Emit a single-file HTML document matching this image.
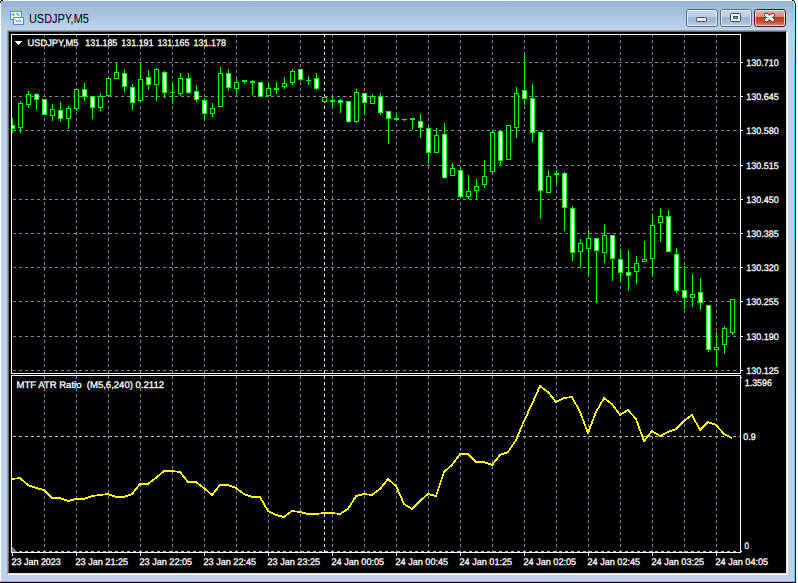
<!DOCTYPE html>
<html><head><meta charset="utf-8"><title>USDJPY,M5</title>
<style>
html,body{margin:0;padding:0;background:#fff;}
body{width:798px;height:583px;position:relative;overflow:hidden;font-family:"Liberation Sans",sans-serif;}
#win{position:absolute;left:0;top:0;width:796px;height:583px;background:#bcd2ea;overflow:hidden;}
#tb{position:absolute;left:0;top:1px;width:795px;height:29px;background:linear-gradient(#98b4d2,#bdd4ed);}
#hl{position:absolute;left:0;top:0;width:795px;height:1px;background:#fbfdff;}
#hlL{position:absolute;left:0;top:0;width:1px;height:581px;background:#fbfdff;}
#cy{position:absolute;left:794px;top:2px;width:1px;height:580px;background:linear-gradient(#aee6f8 0,#5ad6fb 60px,#56d6ff);}
#dk{position:absolute;left:795px;top:3px;width:1px;height:580px;background:#1c1616;}
#cyb{position:absolute;left:0;top:581px;width:795px;height:1px;background:#36d3ec;}
#dkb{position:absolute;left:0;top:582px;width:796px;height:1px;background:#0a0a0a;}
#edge{position:absolute;left:7px;top:30px;width:781px;height:545px;box-sizing:border-box;border:1px solid;border-color:#a0a0a0 #fff #fff #a0a0a0;}
#edge2{position:absolute;left:8px;top:31px;width:779px;height:543px;box-sizing:border-box;border:1px solid;border-color:#696969 #e3e3e3 #e3e3e3 #696969;background:#000;}
#title{position:absolute;left:29.3px;top:10px;transform:scaleX(0.872);font-size:12.5px;line-height:18px;color:#000;white-space:pre;transform-origin:0 0;}
.btn{position:absolute;top:9px;height:18px;box-sizing:border-box;border:1px solid #566a88;border-radius:3px;}
.btn i{position:absolute;left:0;top:0;right:0;bottom:0;border:1px solid rgba(255,255,255,.65);border-radius:2px;}
.g{background:linear-gradient(#c3d5ea 0,#bccfe6 43%,#9ab4d2 44%,#a2bcd9 70%,#b7cfea 100%);}
.r{background:linear-gradient(#e9ada0 0,#dc8a7a 43%,#b9391c 44%,#c24b2e 70%,#d98468 100%);border-color:#481222;}
</style></head><body>
<div id="win">
<div id="tb"></div><div id="hl"></div><div id="hlL"></div>
<div id="cy"></div><div id="dk"></div><div id="cyb"></div><div id="dkb"></div>
<svg width="796" height="4" style="position:absolute;left:0;top:0" shape-rendering="crispEdges">
<rect x="1" y="0" width="2" height="1" fill="#0c0c0c"/><rect x="0" y="1" width="1" height="2" fill="#0c0c0c"/><rect x="1" y="1" width="1" height="1" fill="#e8eef5"/>
<rect x="792" y="0" width="2" height="1" fill="#0a1c22"/><rect x="794" y="0" width="2" height="1" fill="#fff"/><rect x="793" y="1" width="1" height="2" fill="#c8eefa"/><rect x="794" y="1" width="1" height="2" fill="#0c3a44"/><rect x="795" y="1" width="1" height="2" fill="#fff"/>
</svg>
<div id="edge"></div><div id="edge2"></div>
<svg width="16" height="16" viewBox="0 0 16 16" style="position:absolute;left:9px;top:10px" shape-rendering="crispEdges">
<rect x="1.5" y="1.5" width="11" height="8" fill="#fff" stroke="#4a86f8"/><rect x="1.5" y="1.5" width="11" height="8" fill="none" stroke="#3f9a96" stroke-dasharray="1 2"/>
<path d="M5.5 3.5 L3.5 4.5 L5.5 5.5 M7.5 3 L9.5 5 L10.5 5.5" fill="none" stroke="#4a86f0" stroke-width="1.2" shape-rendering="auto"/>
<rect x="4.5" y="7.5" width="10" height="7" fill="#fff" stroke="#4a86f8"/><rect x="4.5" y="7.5" width="10" height="7" fill="none" stroke="#3f9a96" stroke-dasharray="1 2"/>
<polyline points="6.5,9.5 8.5,12.5 10.5,9.5 12.5,12.5" fill="none" stroke="#4a86f0" shape-rendering="auto"/>
</svg>
<div id="title">USDJPY,M5</div>
<div class="btn g" style="left:686px;width:32px"><i></i><svg width="30" height="16" style="position:absolute;left:0;top:0"><rect x="9.5" y="7.5" width="10" height="4" fill="#f4f4f4" stroke="#3f4457" rx="1.2"/></svg></div>
<div class="btn g" style="left:720px;width:32px"><i></i><svg width="30" height="16" style="position:absolute;left:0;top:0"><rect x="9.5" y="3.5" width="10" height="8" fill="#f8f8f8" stroke="#3f4457" rx="1.2"/><rect x="12.5" y="6.5" width="4" height="2" fill="#8fb0d8" stroke="#3f4457"/></svg></div>
<div class="btn r" style="left:754px;width:32px"><i></i><svg width="30" height="16" style="position:absolute;left:0;top:0"><g stroke-linecap="round" fill="none"><path d="M11.3 5.1 L17.7 9.9 M17.7 5.1 L11.3 9.9" stroke="#454250" stroke-width="4.4"/><path d="M11.3 5.1 L17.7 9.9 M17.7 5.1 L11.3 9.9" stroke="#fafafa" stroke-width="2.6"/></g></svg></div>
</div>
<svg width="798" height="583" viewBox="0 0 798 583" style="position:absolute;left:0;top:0" shape-rendering="crispEdges">
<defs><clipPath id="cm"><rect x="12" y="35" width="728" height="338"/></clipPath><clipPath id="cs"><rect x="12" y="376" width="728" height="176"/></clipPath></defs>
<rect x="9" y="32" width="777" height="541" fill="#000"/>
<line x1="44.5" y1="34" x2="44.5" y2="373" stroke="#778899" stroke-dasharray="3 3"/>
<line x1="44.5" y1="376" x2="44.5" y2="552" stroke="#778899" stroke-dasharray="3 3" stroke-dashoffset="0"/>
<line x1="76.5" y1="34" x2="76.5" y2="373" stroke="#778899" stroke-dasharray="3 3"/>
<line x1="76.5" y1="376" x2="76.5" y2="552" stroke="#778899" stroke-dasharray="3 3" stroke-dashoffset="0"/>
<line x1="108.5" y1="34" x2="108.5" y2="373" stroke="#778899" stroke-dasharray="3 3"/>
<line x1="108.5" y1="376" x2="108.5" y2="552" stroke="#778899" stroke-dasharray="3 3" stroke-dashoffset="0"/>
<line x1="140.5" y1="34" x2="140.5" y2="373" stroke="#778899" stroke-dasharray="3 3"/>
<line x1="140.5" y1="376" x2="140.5" y2="552" stroke="#778899" stroke-dasharray="3 3" stroke-dashoffset="0"/>
<line x1="172.5" y1="34" x2="172.5" y2="373" stroke="#778899" stroke-dasharray="3 3"/>
<line x1="172.5" y1="376" x2="172.5" y2="552" stroke="#778899" stroke-dasharray="3 3" stroke-dashoffset="0"/>
<line x1="204.5" y1="34" x2="204.5" y2="373" stroke="#778899" stroke-dasharray="3 3"/>
<line x1="204.5" y1="376" x2="204.5" y2="552" stroke="#778899" stroke-dasharray="3 3" stroke-dashoffset="0"/>
<line x1="236.5" y1="34" x2="236.5" y2="373" stroke="#778899" stroke-dasharray="3 3"/>
<line x1="236.5" y1="376" x2="236.5" y2="552" stroke="#778899" stroke-dasharray="3 3" stroke-dashoffset="0"/>
<line x1="268.5" y1="34" x2="268.5" y2="373" stroke="#778899" stroke-dasharray="3 3"/>
<line x1="268.5" y1="376" x2="268.5" y2="552" stroke="#778899" stroke-dasharray="3 3" stroke-dashoffset="0"/>
<line x1="300.5" y1="34" x2="300.5" y2="373" stroke="#778899" stroke-dasharray="3 3"/>
<line x1="300.5" y1="376" x2="300.5" y2="552" stroke="#778899" stroke-dasharray="3 3" stroke-dashoffset="0"/>
<line x1="332.5" y1="34" x2="332.5" y2="373" stroke="#778899" stroke-dasharray="3 3"/>
<line x1="332.5" y1="376" x2="332.5" y2="552" stroke="#778899" stroke-dasharray="3 3" stroke-dashoffset="0"/>
<line x1="364.5" y1="34" x2="364.5" y2="373" stroke="#778899" stroke-dasharray="3 3"/>
<line x1="364.5" y1="376" x2="364.5" y2="552" stroke="#778899" stroke-dasharray="3 3" stroke-dashoffset="0"/>
<line x1="396.5" y1="34" x2="396.5" y2="373" stroke="#778899" stroke-dasharray="3 3"/>
<line x1="396.5" y1="376" x2="396.5" y2="552" stroke="#778899" stroke-dasharray="3 3" stroke-dashoffset="0"/>
<line x1="428.5" y1="34" x2="428.5" y2="373" stroke="#778899" stroke-dasharray="3 3"/>
<line x1="428.5" y1="376" x2="428.5" y2="552" stroke="#778899" stroke-dasharray="3 3" stroke-dashoffset="0"/>
<line x1="460.5" y1="34" x2="460.5" y2="373" stroke="#778899" stroke-dasharray="3 3"/>
<line x1="460.5" y1="376" x2="460.5" y2="552" stroke="#778899" stroke-dasharray="3 3" stroke-dashoffset="0"/>
<line x1="492.5" y1="34" x2="492.5" y2="373" stroke="#778899" stroke-dasharray="3 3"/>
<line x1="492.5" y1="376" x2="492.5" y2="552" stroke="#778899" stroke-dasharray="3 3" stroke-dashoffset="0"/>
<line x1="524.5" y1="34" x2="524.5" y2="373" stroke="#778899" stroke-dasharray="3 3"/>
<line x1="524.5" y1="376" x2="524.5" y2="552" stroke="#778899" stroke-dasharray="3 3" stroke-dashoffset="0"/>
<line x1="556.5" y1="34" x2="556.5" y2="373" stroke="#778899" stroke-dasharray="3 3"/>
<line x1="556.5" y1="376" x2="556.5" y2="552" stroke="#778899" stroke-dasharray="3 3" stroke-dashoffset="0"/>
<line x1="588.5" y1="34" x2="588.5" y2="373" stroke="#778899" stroke-dasharray="3 3"/>
<line x1="588.5" y1="376" x2="588.5" y2="552" stroke="#778899" stroke-dasharray="3 3" stroke-dashoffset="0"/>
<line x1="620.5" y1="34" x2="620.5" y2="373" stroke="#778899" stroke-dasharray="3 3"/>
<line x1="620.5" y1="376" x2="620.5" y2="552" stroke="#778899" stroke-dasharray="3 3" stroke-dashoffset="0"/>
<line x1="652.5" y1="34" x2="652.5" y2="373" stroke="#778899" stroke-dasharray="3 3"/>
<line x1="652.5" y1="376" x2="652.5" y2="552" stroke="#778899" stroke-dasharray="3 3" stroke-dashoffset="0"/>
<line x1="684.5" y1="34" x2="684.5" y2="373" stroke="#778899" stroke-dasharray="3 3"/>
<line x1="684.5" y1="376" x2="684.5" y2="552" stroke="#778899" stroke-dasharray="3 3" stroke-dashoffset="0"/>
<line x1="716.5" y1="34" x2="716.5" y2="373" stroke="#778899" stroke-dasharray="3 3"/>
<line x1="716.5" y1="376" x2="716.5" y2="552" stroke="#778899" stroke-dasharray="3 3" stroke-dashoffset="0"/>
<line x1="324.5" y1="34" x2="324.5" y2="373" stroke="#fff" stroke-dasharray="3 3"/>
<line x1="324.5" y1="376" x2="324.5" y2="552" stroke="#fff" stroke-dasharray="3 3"/>
<line x1="13" y1="62.5" x2="738" y2="62.5" stroke="#778899" stroke-dasharray="3 3"/>
<rect x="741" y="62" width="2" height="1" fill="#fff"/>
<line x1="13" y1="96.5" x2="738" y2="96.5" stroke="#778899" stroke-dasharray="3 3"/>
<rect x="741" y="96" width="2" height="1" fill="#fff"/>
<line x1="13" y1="130.5" x2="738" y2="130.5" stroke="#778899" stroke-dasharray="3 3"/>
<rect x="741" y="130" width="2" height="1" fill="#fff"/>
<line x1="13" y1="165.5" x2="738" y2="165.5" stroke="#778899" stroke-dasharray="3 3"/>
<rect x="741" y="165" width="2" height="1" fill="#fff"/>
<line x1="13" y1="199.5" x2="738" y2="199.5" stroke="#778899" stroke-dasharray="3 3"/>
<rect x="741" y="199" width="2" height="1" fill="#fff"/>
<line x1="13" y1="233.5" x2="738" y2="233.5" stroke="#778899" stroke-dasharray="3 3"/>
<rect x="741" y="233" width="2" height="1" fill="#fff"/>
<line x1="13" y1="267.5" x2="738" y2="267.5" stroke="#778899" stroke-dasharray="3 3"/>
<rect x="741" y="267" width="2" height="1" fill="#fff"/>
<line x1="13" y1="301.5" x2="738" y2="301.5" stroke="#778899" stroke-dasharray="3 3"/>
<rect x="741" y="301" width="2" height="1" fill="#fff"/>
<line x1="13" y1="336.5" x2="738" y2="336.5" stroke="#778899" stroke-dasharray="3 3"/>
<rect x="741" y="336" width="2" height="1" fill="#fff"/>
<line x1="13" y1="370.5" x2="738" y2="370.5" stroke="#778899" stroke-dasharray="3 3"/>
<rect x="741" y="370" width="2" height="1" fill="#fff"/>
<line x1="13" y1="436.5" x2="738" y2="436.5" stroke="#c0c0c0" stroke-dasharray="3 3"/>
<line x1="13" y1="551.5" x2="738" y2="551.5" stroke="#c0c0c0" stroke-dasharray="3 3"/>
<rect x="739" y="436" width="1" height="1" fill="#c0c0c0"/><rect x="741" y="551" width="1" height="1" fill="#fff"/>
<g clip-path="url(#cm)">
<rect x="12" y="118" width="1" height="15" fill="#00ff00"/>
<rect x="10" y="125" width="5" height="4" fill="#00ff00"/>
<rect x="11" y="126" width="3" height="2" fill="#fff"/>
<rect x="20" y="101" width="1" height="32" fill="#00ff00"/>
<rect x="18" y="103" width="5" height="25" fill="#00ff00"/>
<rect x="19" y="104" width="3" height="23" fill="#000"/>
<rect x="28" y="91" width="1" height="17" fill="#00ff00"/>
<rect x="26" y="94" width="5" height="11" fill="#00ff00"/>
<rect x="27" y="95" width="3" height="9" fill="#000"/>
<rect x="36" y="93" width="1" height="17" fill="#00ff00"/>
<rect x="34" y="94" width="5" height="6" fill="#00ff00"/>
<rect x="35" y="95" width="3" height="4" fill="#fff"/>
<rect x="44" y="99" width="1" height="16" fill="#00ff00"/>
<rect x="42" y="99" width="5" height="16" fill="#00ff00"/>
<rect x="43" y="100" width="3" height="14" fill="#fff"/>
<rect x="52" y="104" width="1" height="17" fill="#00ff00"/>
<rect x="50" y="109" width="5" height="7" fill="#00ff00"/>
<rect x="51" y="110" width="3" height="5" fill="#000"/>
<rect x="60" y="102" width="1" height="20" fill="#00ff00"/>
<rect x="58" y="110" width="5" height="9" fill="#00ff00"/>
<rect x="59" y="111" width="3" height="7" fill="#fff"/>
<rect x="68" y="106" width="1" height="23" fill="#00ff00"/>
<rect x="66" y="108" width="5" height="11" fill="#00ff00"/>
<rect x="67" y="109" width="3" height="9" fill="#000"/>
<rect x="76" y="89" width="1" height="22" fill="#00ff00"/>
<rect x="74" y="89" width="5" height="20" fill="#00ff00"/>
<rect x="75" y="90" width="3" height="18" fill="#000"/>
<rect x="84" y="83" width="1" height="18" fill="#00ff00"/>
<rect x="82" y="89" width="5" height="8" fill="#00ff00"/>
<rect x="83" y="90" width="3" height="6" fill="#fff"/>
<rect x="92" y="96" width="1" height="23" fill="#00ff00"/>
<rect x="90" y="96" width="5" height="12" fill="#00ff00"/>
<rect x="91" y="97" width="3" height="10" fill="#fff"/>
<rect x="100" y="93" width="1" height="18" fill="#00ff00"/>
<rect x="98" y="96" width="5" height="12" fill="#00ff00"/>
<rect x="99" y="97" width="3" height="10" fill="#000"/>
<rect x="108" y="78" width="1" height="18" fill="#00ff00"/>
<rect x="106" y="78" width="5" height="18" fill="#00ff00"/>
<rect x="107" y="79" width="3" height="16" fill="#000"/>
<rect x="116" y="63" width="1" height="16" fill="#00ff00"/>
<rect x="114" y="72" width="5" height="7" fill="#00ff00"/>
<rect x="115" y="73" width="3" height="5" fill="#000"/>
<rect x="124" y="69" width="1" height="23" fill="#00ff00"/>
<rect x="122" y="73" width="5" height="14" fill="#00ff00"/>
<rect x="123" y="74" width="3" height="12" fill="#fff"/>
<rect x="132" y="84" width="1" height="26" fill="#00ff00"/>
<rect x="130" y="87" width="5" height="16" fill="#00ff00"/>
<rect x="131" y="88" width="3" height="14" fill="#fff"/>
<rect x="140" y="63" width="1" height="38" fill="#00ff00"/>
<rect x="138" y="79" width="5" height="22" fill="#00ff00"/>
<rect x="139" y="80" width="3" height="20" fill="#000"/>
<rect x="148" y="70" width="1" height="20" fill="#00ff00"/>
<rect x="146" y="77" width="5" height="8" fill="#00ff00"/>
<rect x="147" y="78" width="3" height="6" fill="#fff"/>
<rect x="156" y="68" width="1" height="33" fill="#00ff00"/>
<rect x="154" y="69" width="5" height="16" fill="#00ff00"/>
<rect x="155" y="70" width="3" height="14" fill="#000"/>
<rect x="164" y="71" width="1" height="27" fill="#00ff00"/>
<rect x="162" y="72" width="5" height="21" fill="#00ff00"/>
<rect x="163" y="73" width="3" height="19" fill="#fff"/>
<rect x="172" y="82" width="1" height="22" fill="#00ff00"/>
<rect x="170" y="92" width="5" height="1" fill="#00ff00"/>
<rect x="180" y="73" width="1" height="23" fill="#00ff00"/>
<rect x="178" y="78" width="5" height="16" fill="#00ff00"/>
<rect x="179" y="79" width="3" height="14" fill="#000"/>
<rect x="188" y="73" width="1" height="21" fill="#00ff00"/>
<rect x="186" y="78" width="5" height="15" fill="#00ff00"/>
<rect x="187" y="79" width="3" height="13" fill="#fff"/>
<rect x="196" y="85" width="1" height="17" fill="#00ff00"/>
<rect x="194" y="91" width="5" height="9" fill="#00ff00"/>
<rect x="195" y="92" width="3" height="7" fill="#fff"/>
<rect x="204" y="98" width="1" height="21" fill="#00ff00"/>
<rect x="202" y="100" width="5" height="14" fill="#00ff00"/>
<rect x="203" y="101" width="3" height="12" fill="#fff"/>
<rect x="212" y="103" width="1" height="14" fill="#00ff00"/>
<rect x="210" y="108" width="5" height="6" fill="#00ff00"/>
<rect x="211" y="109" width="3" height="4" fill="#000"/>
<rect x="220" y="67" width="1" height="40" fill="#00ff00"/>
<rect x="218" y="73" width="5" height="34" fill="#00ff00"/>
<rect x="219" y="74" width="3" height="32" fill="#000"/>
<rect x="228" y="69" width="1" height="22" fill="#00ff00"/>
<rect x="226" y="73" width="5" height="15" fill="#00ff00"/>
<rect x="227" y="74" width="3" height="13" fill="#fff"/>
<rect x="236" y="79" width="1" height="15" fill="#00ff00"/>
<rect x="234" y="82" width="5" height="7" fill="#00ff00"/>
<rect x="235" y="83" width="3" height="5" fill="#000"/>
<rect x="244" y="80" width="1" height="4" fill="#00ff00"/>
<rect x="242" y="80" width="5" height="2" fill="#00ff00"/>
<rect x="252" y="80" width="1" height="15" fill="#00ff00"/>
<rect x="250" y="81" width="5" height="2" fill="#00ff00"/>
<rect x="260" y="82" width="1" height="15" fill="#00ff00"/>
<rect x="258" y="82" width="5" height="15" fill="#00ff00"/>
<rect x="259" y="83" width="3" height="13" fill="#fff"/>
<rect x="268" y="83" width="1" height="14" fill="#00ff00"/>
<rect x="266" y="88" width="5" height="8" fill="#00ff00"/>
<rect x="267" y="89" width="3" height="6" fill="#000"/>
<rect x="276" y="82" width="1" height="12" fill="#00ff00"/>
<rect x="274" y="88" width="5" height="2" fill="#00ff00"/>
<rect x="284" y="77" width="1" height="12" fill="#00ff00"/>
<rect x="282" y="83" width="5" height="4" fill="#00ff00"/>
<rect x="283" y="84" width="3" height="2" fill="#000"/>
<rect x="292" y="69" width="1" height="16" fill="#00ff00"/>
<rect x="290" y="71" width="5" height="12" fill="#00ff00"/>
<rect x="291" y="72" width="3" height="10" fill="#000"/>
<rect x="300" y="69" width="1" height="12" fill="#00ff00"/>
<rect x="298" y="69" width="5" height="11" fill="#00ff00"/>
<rect x="299" y="70" width="3" height="9" fill="#fff"/>
<rect x="308" y="76" width="1" height="9" fill="#00ff00"/>
<rect x="306" y="80" width="5" height="1" fill="#00ff00"/>
<rect x="316" y="73" width="1" height="17" fill="#00ff00"/>
<rect x="314" y="78" width="5" height="11" fill="#00ff00"/>
<rect x="315" y="79" width="3" height="9" fill="#fff"/>
<rect x="324" y="96" width="1" height="6" fill="#00ff00"/>
<rect x="322" y="97" width="5" height="5" fill="#00ff00"/>
<rect x="323" y="98" width="3" height="3" fill="#000"/>
<rect x="332" y="96" width="1" height="11" fill="#00ff00"/>
<rect x="330" y="100" width="5" height="2" fill="#00ff00"/>
<rect x="340" y="99" width="1" height="14" fill="#00ff00"/>
<rect x="338" y="100" width="5" height="3" fill="#00ff00"/>
<rect x="339" y="101" width="3" height="1" fill="#fff"/>
<rect x="348" y="101" width="1" height="22" fill="#00ff00"/>
<rect x="346" y="101" width="5" height="21" fill="#00ff00"/>
<rect x="347" y="102" width="3" height="19" fill="#fff"/>
<rect x="356" y="89" width="1" height="34" fill="#00ff00"/>
<rect x="354" y="92" width="5" height="30" fill="#00ff00"/>
<rect x="355" y="93" width="3" height="28" fill="#000"/>
<rect x="364" y="93" width="1" height="22" fill="#00ff00"/>
<rect x="362" y="93" width="5" height="10" fill="#00ff00"/>
<rect x="363" y="94" width="3" height="8" fill="#fff"/>
<rect x="372" y="94" width="1" height="10" fill="#00ff00"/>
<rect x="370" y="96" width="5" height="8" fill="#00ff00"/>
<rect x="371" y="97" width="3" height="6" fill="#000"/>
<rect x="380" y="93" width="1" height="22" fill="#00ff00"/>
<rect x="378" y="96" width="5" height="17" fill="#00ff00"/>
<rect x="379" y="97" width="3" height="15" fill="#fff"/>
<rect x="388" y="111" width="1" height="33" fill="#00ff00"/>
<rect x="386" y="111" width="5" height="8" fill="#00ff00"/>
<rect x="387" y="112" width="3" height="6" fill="#fff"/>
<rect x="396" y="114" width="1" height="7" fill="#00ff00"/>
<rect x="394" y="118" width="5" height="2" fill="#00ff00"/>
<rect x="404" y="119" width="1" height="2" fill="#00ff00"/>
<rect x="402" y="119" width="5" height="1" fill="#00ff00"/>
<rect x="412" y="118" width="1" height="12" fill="#00ff00"/>
<rect x="410" y="118" width="5" height="2" fill="#00ff00"/>
<rect x="420" y="114" width="1" height="24" fill="#00ff00"/>
<rect x="418" y="121" width="5" height="7" fill="#00ff00"/>
<rect x="419" y="122" width="3" height="5" fill="#fff"/>
<rect x="428" y="126" width="1" height="38" fill="#00ff00"/>
<rect x="426" y="128" width="5" height="25" fill="#00ff00"/>
<rect x="427" y="129" width="3" height="23" fill="#fff"/>
<rect x="436" y="128" width="1" height="25" fill="#00ff00"/>
<rect x="434" y="135" width="5" height="18" fill="#00ff00"/>
<rect x="435" y="136" width="3" height="16" fill="#000"/>
<rect x="444" y="123" width="1" height="56" fill="#00ff00"/>
<rect x="442" y="134" width="5" height="44" fill="#00ff00"/>
<rect x="443" y="135" width="3" height="42" fill="#fff"/>
<rect x="452" y="163" width="1" height="13" fill="#00ff00"/>
<rect x="450" y="168" width="5" height="8" fill="#00ff00"/>
<rect x="451" y="169" width="3" height="6" fill="#000"/>
<rect x="460" y="167" width="1" height="30" fill="#00ff00"/>
<rect x="458" y="170" width="5" height="27" fill="#00ff00"/>
<rect x="459" y="171" width="3" height="25" fill="#fff"/>
<rect x="468" y="175" width="1" height="24" fill="#00ff00"/>
<rect x="466" y="191" width="5" height="6" fill="#00ff00"/>
<rect x="467" y="192" width="3" height="4" fill="#000"/>
<rect x="476" y="179" width="1" height="20" fill="#00ff00"/>
<rect x="474" y="186" width="5" height="5" fill="#00ff00"/>
<rect x="475" y="187" width="3" height="3" fill="#000"/>
<rect x="484" y="160" width="1" height="28" fill="#00ff00"/>
<rect x="482" y="176" width="5" height="9" fill="#00ff00"/>
<rect x="483" y="177" width="3" height="7" fill="#000"/>
<rect x="492" y="130" width="1" height="42" fill="#00ff00"/>
<rect x="490" y="132" width="5" height="40" fill="#00ff00"/>
<rect x="491" y="133" width="3" height="38" fill="#000"/>
<rect x="500" y="130" width="1" height="35" fill="#00ff00"/>
<rect x="498" y="131" width="5" height="30" fill="#00ff00"/>
<rect x="499" y="132" width="3" height="28" fill="#fff"/>
<rect x="508" y="125" width="1" height="35" fill="#00ff00"/>
<rect x="506" y="125" width="5" height="35" fill="#00ff00"/>
<rect x="507" y="126" width="3" height="33" fill="#000"/>
<rect x="516" y="87" width="1" height="51" fill="#00ff00"/>
<rect x="514" y="93" width="5" height="35" fill="#00ff00"/>
<rect x="515" y="94" width="3" height="33" fill="#000"/>
<rect x="524" y="54" width="1" height="51" fill="#00ff00"/>
<rect x="522" y="90" width="5" height="9" fill="#00ff00"/>
<rect x="523" y="91" width="3" height="7" fill="#fff"/>
<rect x="532" y="84" width="1" height="58" fill="#00ff00"/>
<rect x="530" y="98" width="5" height="35" fill="#00ff00"/>
<rect x="531" y="99" width="3" height="33" fill="#fff"/>
<rect x="540" y="132" width="1" height="87" fill="#00ff00"/>
<rect x="538" y="132" width="5" height="59" fill="#00ff00"/>
<rect x="539" y="133" width="3" height="57" fill="#fff"/>
<rect x="548" y="170" width="1" height="23" fill="#00ff00"/>
<rect x="546" y="176" width="5" height="17" fill="#00ff00"/>
<rect x="547" y="177" width="3" height="15" fill="#000"/>
<rect x="556" y="170" width="1" height="14" fill="#00ff00"/>
<rect x="554" y="173" width="5" height="2" fill="#00ff00"/>
<rect x="564" y="172" width="1" height="59" fill="#00ff00"/>
<rect x="562" y="173" width="5" height="35" fill="#00ff00"/>
<rect x="563" y="174" width="3" height="33" fill="#fff"/>
<rect x="572" y="206" width="1" height="55" fill="#00ff00"/>
<rect x="570" y="208" width="5" height="45" fill="#00ff00"/>
<rect x="571" y="209" width="3" height="43" fill="#fff"/>
<rect x="580" y="239" width="1" height="29" fill="#00ff00"/>
<rect x="578" y="243" width="5" height="9" fill="#00ff00"/>
<rect x="579" y="244" width="3" height="7" fill="#000"/>
<rect x="588" y="230" width="1" height="46" fill="#00ff00"/>
<rect x="586" y="238" width="5" height="11" fill="#00ff00"/>
<rect x="587" y="239" width="3" height="9" fill="#000"/>
<rect x="596" y="238" width="1" height="65" fill="#00ff00"/>
<rect x="594" y="238" width="5" height="13" fill="#00ff00"/>
<rect x="595" y="239" width="3" height="11" fill="#fff"/>
<rect x="604" y="224" width="1" height="39" fill="#00ff00"/>
<rect x="602" y="235" width="5" height="18" fill="#00ff00"/>
<rect x="603" y="236" width="3" height="16" fill="#000"/>
<rect x="612" y="235" width="1" height="46" fill="#00ff00"/>
<rect x="610" y="235" width="5" height="24" fill="#00ff00"/>
<rect x="611" y="236" width="3" height="22" fill="#fff"/>
<rect x="620" y="249" width="1" height="33" fill="#00ff00"/>
<rect x="618" y="259" width="5" height="14" fill="#00ff00"/>
<rect x="619" y="260" width="3" height="12" fill="#fff"/>
<rect x="628" y="250" width="1" height="41" fill="#00ff00"/>
<rect x="626" y="272" width="5" height="4" fill="#00ff00"/>
<rect x="627" y="273" width="3" height="2" fill="#fff"/>
<rect x="636" y="256" width="1" height="28" fill="#00ff00"/>
<rect x="634" y="263" width="5" height="9" fill="#00ff00"/>
<rect x="635" y="264" width="3" height="7" fill="#000"/>
<rect x="644" y="241" width="1" height="21" fill="#00ff00"/>
<rect x="642" y="259" width="5" height="3" fill="#00ff00"/>
<rect x="643" y="260" width="3" height="1" fill="#000"/>
<rect x="652" y="214" width="1" height="62" fill="#00ff00"/>
<rect x="650" y="225" width="5" height="34" fill="#00ff00"/>
<rect x="651" y="226" width="3" height="32" fill="#000"/>
<rect x="660" y="208" width="1" height="34" fill="#00ff00"/>
<rect x="658" y="216" width="5" height="7" fill="#00ff00"/>
<rect x="659" y="217" width="3" height="5" fill="#000"/>
<rect x="668" y="210" width="1" height="42" fill="#00ff00"/>
<rect x="666" y="216" width="5" height="36" fill="#00ff00"/>
<rect x="667" y="217" width="3" height="34" fill="#fff"/>
<rect x="676" y="248" width="1" height="45" fill="#00ff00"/>
<rect x="674" y="254" width="5" height="37" fill="#00ff00"/>
<rect x="675" y="255" width="3" height="35" fill="#fff"/>
<rect x="684" y="266" width="1" height="43" fill="#00ff00"/>
<rect x="682" y="290" width="5" height="8" fill="#00ff00"/>
<rect x="683" y="291" width="3" height="6" fill="#fff"/>
<rect x="692" y="274" width="1" height="33" fill="#00ff00"/>
<rect x="690" y="294" width="5" height="4" fill="#00ff00"/>
<rect x="691" y="295" width="3" height="2" fill="#000"/>
<rect x="700" y="278" width="1" height="32" fill="#00ff00"/>
<rect x="698" y="292" width="5" height="11" fill="#00ff00"/>
<rect x="699" y="293" width="3" height="9" fill="#fff"/>
<rect x="708" y="305" width="1" height="47" fill="#00ff00"/>
<rect x="706" y="305" width="5" height="45" fill="#00ff00"/>
<rect x="707" y="306" width="3" height="43" fill="#fff"/>
<rect x="716" y="332" width="1" height="34" fill="#00ff00"/>
<rect x="714" y="347" width="5" height="3" fill="#00ff00"/>
<rect x="715" y="348" width="3" height="1" fill="#000"/>
<rect x="724" y="326" width="1" height="28" fill="#00ff00"/>
<rect x="722" y="328" width="5" height="17" fill="#00ff00"/>
<rect x="723" y="329" width="3" height="15" fill="#000"/>
<rect x="732" y="299" width="1" height="36" fill="#00ff00"/>
<rect x="730" y="299" width="5" height="34" fill="#00ff00"/>
<rect x="731" y="300" width="3" height="32" fill="#000"/>
</g>
<g clip-path="url(#cs)"><polyline points="12,479 20,478 28,485 36,488 44,490 52,498 60,498 68,501 76,499 84,499 92,496 100,495 108,494 116,497 124,497 132,494 140,484 148,484 156,478 164,471 172,471 180,472 188,482 196,482 204,488 212,495 220,485 228,485 236,488 244,494 252,497 260,497 268,511 276,515 284,517 292,511 300,512 308,514 316,514 324,513 332,513 340,514 348,509 356,496 364,494 372,495 380,489 388,479 396,486 404,504 412,509 420,501 428,494 436,496 444,472 452,465 460,454 468,454 476,462 484,462 492,465 500,455 508,452 516,440 524,421 532,404 540,386 548,392 556,402 564,398 572,397 580,412 588,433 596,412 604,398 612,404 620,415 628,410 636,419 644,441 652,431 660,436 668,432 676,429 684,421 692,415 700,430 708,422 716,425 724,434 732,438" fill="none" stroke="#ffff00" stroke-width="1.8" stroke-linejoin="round"/></g>
<rect x="12" y="547" width="1" height="5" fill="#6b8399"/><rect x="13" y="548" width="1" height="4" fill="#6b8399"/><rect x="14" y="549" width="1" height="3" fill="#6b8399"/><rect x="15" y="550" width="1" height="2" fill="#6b8399"/><rect x="16" y="551" width="1" height="1" fill="#6b8399"/>
<rect x="11" y="34" width="730" height="1" fill="#fff"/><rect x="11" y="373" width="730" height="1" fill="#fff"/><rect x="11" y="34" width="1" height="340" fill="#fff"/><rect x="740" y="34" width="1" height="340" fill="#fff"/>
<rect x="11" y="375" width="730" height="1" fill="#fff"/><rect x="11" y="552" width="730" height="1" fill="#fff"/><rect x="11" y="375" width="1" height="178" fill="#fff"/><rect x="740" y="375" width="1" height="178" fill="#fff"/>
<rect x="741" y="377" width="1" height="1" fill="#fff"/>
<rect x="12" y="553" width="1" height="3" fill="#fff"/>
<rect x="76" y="553" width="1" height="3" fill="#fff"/>
<rect x="140" y="553" width="1" height="3" fill="#fff"/>
<rect x="204" y="553" width="1" height="3" fill="#fff"/>
<rect x="268" y="553" width="1" height="3" fill="#fff"/>
<rect x="332" y="553" width="1" height="3" fill="#fff"/>
<rect x="396" y="553" width="1" height="3" fill="#fff"/>
<rect x="460" y="553" width="1" height="3" fill="#fff"/>
<rect x="524" y="553" width="1" height="3" fill="#fff"/>
<rect x="588" y="553" width="1" height="3" fill="#fff"/>
<rect x="652" y="553" width="1" height="3" fill="#fff"/>
<rect x="716" y="553" width="1" height="3" fill="#fff"/>
<rect x="15" y="41" width="7" height="1" fill="#fff"/><rect x="16" y="42" width="5" height="1" fill="#fff"/><rect x="17" y="43" width="3" height="1" fill="#fff"/><rect x="18" y="44" width="1" height="1" fill="#fff"/>
<g font-family="Liberation Sans, sans-serif" font-size="9.5" fill="#fff" stroke="#fff" stroke-width="0.3" shape-rendering="auto" text-rendering="geometricPrecision">
<text x="27.5" y="45.7" textLength="51" lengthAdjust="spacingAndGlyphs" xml:space="preserve">USDJPY,M5</text>
<text x="85.3" y="45.7" textLength="32" lengthAdjust="spacingAndGlyphs" xml:space="preserve">131.185</text>
<text x="121.3" y="45.7" textLength="32.2" lengthAdjust="spacingAndGlyphs" xml:space="preserve">131.191</text>
<text x="157.4" y="45.7" textLength="32" lengthAdjust="spacingAndGlyphs" xml:space="preserve">131.165</text>
<text x="193.4" y="45.7" textLength="32.5" lengthAdjust="spacingAndGlyphs" xml:space="preserve">131.178</text>
<text x="16.5" y="388" textLength="147.5" lengthAdjust="spacingAndGlyphs" xml:space="preserve">MTF ATR Ratio  (M5,6,240) 0.2112</text>
<text x="746.3" y="66" textLength="32.5" lengthAdjust="spacingAndGlyphs" xml:space="preserve">130.710</text>
<text x="746.3" y="100" textLength="32.5" lengthAdjust="spacingAndGlyphs" xml:space="preserve">130.645</text>
<text x="746.3" y="134" textLength="32.5" lengthAdjust="spacingAndGlyphs" xml:space="preserve">130.580</text>
<text x="746.3" y="169" textLength="32.5" lengthAdjust="spacingAndGlyphs" xml:space="preserve">130.515</text>
<text x="746.3" y="203" textLength="32.5" lengthAdjust="spacingAndGlyphs" xml:space="preserve">130.450</text>
<text x="746.3" y="237" textLength="32.5" lengthAdjust="spacingAndGlyphs" xml:space="preserve">130.385</text>
<text x="746.3" y="271" textLength="32.5" lengthAdjust="spacingAndGlyphs" xml:space="preserve">130.320</text>
<text x="746.3" y="305" textLength="32.5" lengthAdjust="spacingAndGlyphs" xml:space="preserve">130.255</text>
<text x="746.3" y="340" textLength="32.5" lengthAdjust="spacingAndGlyphs" xml:space="preserve">130.190</text>
<text x="746.3" y="374" textLength="32.5" lengthAdjust="spacingAndGlyphs" xml:space="preserve">130.125</text>
<text x="744.8" y="386" textLength="27" lengthAdjust="spacingAndGlyphs" xml:space="preserve">1.3596</text>
<text x="743.2" y="440" textLength="12.5" lengthAdjust="spacingAndGlyphs" xml:space="preserve">0.9</text>
<text x="744.5" y="549" textLength="4.5" lengthAdjust="spacingAndGlyphs" xml:space="preserve">0</text>
<text x="11.5" y="565" textLength="49.3" lengthAdjust="spacingAndGlyphs" xml:space="preserve">23 Jan 2023</text>
<text x="75.5" y="565" textLength="52.6" lengthAdjust="spacingAndGlyphs" xml:space="preserve">23 Jan 21:25</text>
<text x="139.5" y="565" textLength="52.6" lengthAdjust="spacingAndGlyphs" xml:space="preserve">23 Jan 22:05</text>
<text x="203.5" y="565" textLength="52.6" lengthAdjust="spacingAndGlyphs" xml:space="preserve">23 Jan 22:45</text>
<text x="267.5" y="565" textLength="52.6" lengthAdjust="spacingAndGlyphs" xml:space="preserve">23 Jan 23:25</text>
<text x="331.5" y="565" textLength="52.6" lengthAdjust="spacingAndGlyphs" xml:space="preserve">24 Jan 00:05</text>
<text x="395.5" y="565" textLength="52.6" lengthAdjust="spacingAndGlyphs" xml:space="preserve">24 Jan 00:45</text>
<text x="459.5" y="565" textLength="52.6" lengthAdjust="spacingAndGlyphs" xml:space="preserve">24 Jan 01:25</text>
<text x="523.5" y="565" textLength="52.6" lengthAdjust="spacingAndGlyphs" xml:space="preserve">24 Jan 02:05</text>
<text x="587.5" y="565" textLength="52.6" lengthAdjust="spacingAndGlyphs" xml:space="preserve">24 Jan 02:45</text>
<text x="651.5" y="565" textLength="52.6" lengthAdjust="spacingAndGlyphs" xml:space="preserve">24 Jan 03:25</text>
<text x="715.5" y="565" textLength="52.6" lengthAdjust="spacingAndGlyphs" xml:space="preserve">24 Jan 04:05</text>
</g>
</svg>
</body></html>
